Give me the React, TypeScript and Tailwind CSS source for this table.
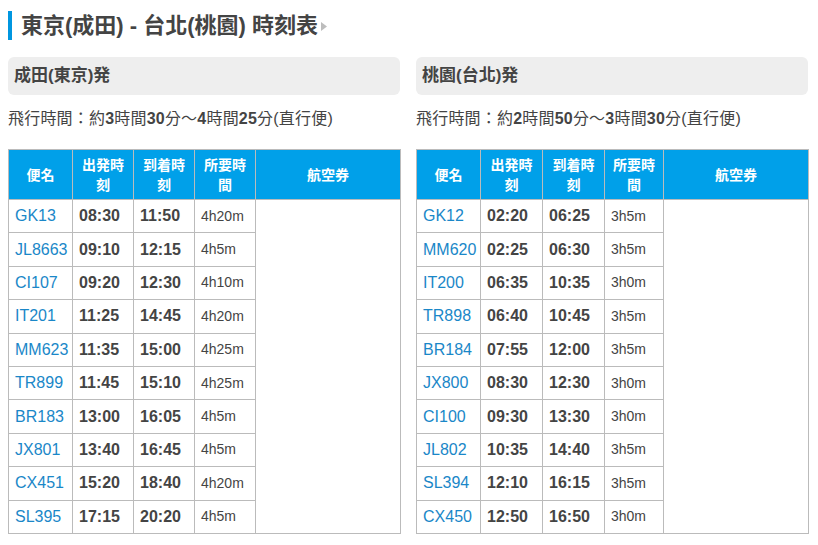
import React from "react";

type Row = [string, string, string, string];

const left: Row[] = [
  ["GK13", "08:30", "11:50", "4h20m"],
  ["JL8663", "09:10", "12:15", "4h5m"],
  ["CI107", "09:20", "12:30", "4h10m"],
  ["IT201", "11:25", "14:45", "4h20m"],
  ["MM623", "11:35", "15:00", "4h25m"],
  ["TR899", "11:45", "15:10", "4h25m"],
  ["BR183", "13:00", "16:05", "4h5m"],
  ["JX801", "13:40", "16:45", "4h5m"],
  ["CX451", "15:20", "18:40", "4h20m"],
  ["SL395", "17:15", "20:20", "4h5m"],
];

const right: Row[] = [
  ["GK12", "02:20", "06:25", "3h5m"],
  ["MM620", "02:25", "06:30", "3h5m"],
  ["IT200", "06:35", "10:35", "3h0m"],
  ["TR898", "06:40", "10:45", "3h5m"],
  ["BR184", "07:55", "12:00", "3h5m"],
  ["JX800", "08:30", "12:30", "3h0m"],
  ["CI100", "09:30", "13:30", "3h0m"],
  ["JL802", "10:35", "14:40", "3h5m"],
  ["SL394", "12:10", "16:15", "3h5m"],
  ["CX450", "12:50", "16:50", "3h0m"],
];

function Section({
  title,
  a,
  b,
  c,
  d,
  rows,
  widths,
}: {
  title: string;
  a: string;
  b: string;
  c: string;
  d: string;
  rows: Row[];
  widths: string[];
}) {
  const th =
    "border border-[#bbbbbb] bg-[#00a0e9] text-white font-bold text-[14px] leading-[20px] text-center align-middle px-2";
  const td = "border border-[#bbbbbb] h-[33.4px] px-[6px] align-middle whitespace-nowrap";
  return (
    <div className="w-[392px] flex flex-col">
      <div className="h-[38px] bg-[#eeeeee] rounded-[6px] flex items-center px-[6px] text-[17px] font-bold text-[#444]">
        {title}
      </div>
      <div className="mt-[14px] h-[20px] flex items-center text-[16px] tracking-[0.2px] text-[#444] whitespace-nowrap">
        飛行時間：約<b>{a}</b>時間<b>{b}</b>分～<b>{c}</b>時間<b>{d}</b>分(直行便)
      </div>
      <table className="mt-[20px] border-collapse w-full table-fixed">
        <colgroup>
          {widths.map((w, i) => (
            <col key={i} style={{ width: w }} />
          ))}
        </colgroup>
        <thead>
          <tr className="h-[50px]">
            <th className={th}>便名</th>
            <th className={th}>出発時刻</th>
            <th className={th}>到着時刻</th>
            <th className={th}>所要時間</th>
            <th className={th}>航空券</th>
          </tr>
        </thead>
        <tbody>
          {rows.map((r, i) => (
            <tr key={r[0]}>
              <td className={`${td} text-[16px] text-[#1a87c8]`}>{r[0]}</td>
              <td className={`${td} text-[16px] font-bold text-[#444]`}>{r[1]}</td>
              <td className={`${td} text-[16px] font-bold text-[#444]`}>{r[2]}</td>
              <td className={`${td} text-[14px] text-[#444]`}>{r[3]}</td>
              {i === 0 && <td rowSpan={10} className="border border-[#bbbbbb]"></td>}
            </tr>
          ))}
        </tbody>
      </table>
    </div>
  );
}

export default function App() {
  return (
    <div
      className="w-[818px] h-[545px] bg-white overflow-hidden"
      style={{ fontFamily: '"Liberation Sans", Arial, "Noto Sans CJK TC", sans-serif' }}
    >
      <div className="pt-[11px] px-2 flex items-center">
        <div className="w-[4px] h-[29px] bg-[#0096e0]" />
        <div className="ml-[9px] text-[22px] font-bold text-[#444] leading-[29px]">
          東京(成田) - 台北(桃園) 時刻表
        </div>
        <svg width="6" height="9" viewBox="0 0 6 9" className="ml-[3px] mt-[1px]">
          <polygon points="0,0 6,4.5 0,9" fill="#bdbdbd" />
        </svg>
      </div>
      <div className="mt-[17px] px-2 flex gap-4">
        <Section
          title="成田(東京)発"
          a="3"
          b="30"
          c="4"
          d="25"
          rows={left}
          widths={["64px", "61px", "61px", "61px", "145px"]}
        />
        <Section
          title="桃園(台北)発"
          a="2"
          b="50"
          c="3"
          d="30"
          rows={right}
          widths={["64px", "62px", "62px", "59px", "145px"]}
        />
      </div>
    </div>
  );
}
